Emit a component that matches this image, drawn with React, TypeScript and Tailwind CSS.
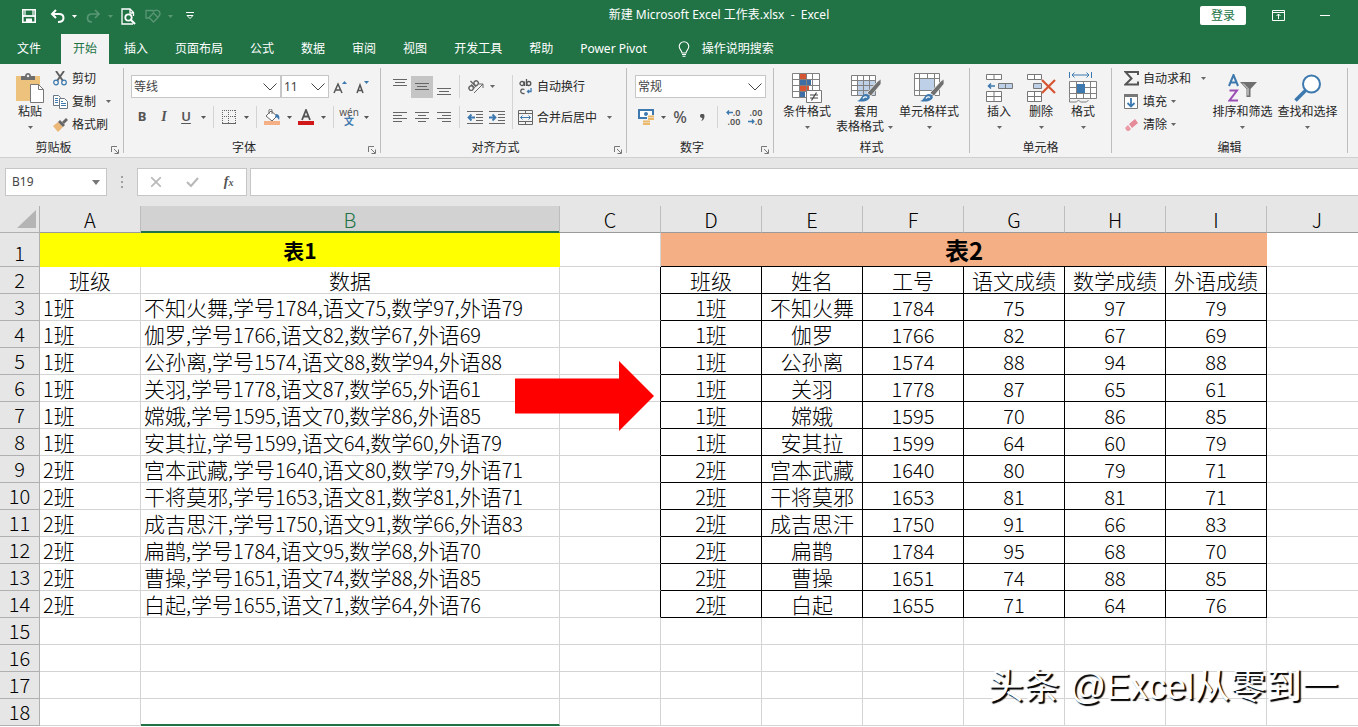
import clsx from "clsx";
import type { ReactNode } from "react";

const columns = ["A", "B", "C", "D", "E", "F", "G", "H", "I", "J"];

const tabs = [
  "插入",
  "页面布局",
  "公式",
  "数据",
  "审阅",
  "视图",
  "开发工具",
  "帮助",
  "Power Pivot",
];

const fields = ["班级", "姓名", "工号", "语文成绩", "数学成绩", "外语成绩"];

// class, name, number, chinese, maths, foreign language
const students = [
  ["1班", "不知火舞", "1784", "75", "97", "79"],
  ["1班", "伽罗", "1766", "82", "67", "69"],
  ["1班", "公孙离", "1574", "88", "94", "88"],
  ["1班", "关羽", "1778", "87", "65", "61"],
  ["1班", "嫦娥", "1595", "70", "86", "85"],
  ["1班", "安其拉", "1599", "64", "60", "79"],
  ["2班", "宫本武藏", "1640", "80", "79", "71"],
  ["2班", "干将莫邪", "1653", "81", "81", "71"],
  ["2班", "成吉思汗", "1750", "91", "66", "83"],
  ["2班", "扁鹊", "1784", "95", "68", "70"],
  ["2班", "曹操", "1651", "74", "88", "85"],
  ["2班", "白起", "1655", "71", "64", "76"],
];

function Caret({ className }: { className?: string }) {
  return (
    <span className={clsx("flex w-3 shrink-0 justify-center", className)}>
      <svg width="5" height="3" viewBox="0 0 5 3" fill="currentColor">
        <path d="M0 0h5L2.5 3z" />
      </svg>
    </span>
  );
}

function Sep() {
  return <span className="mx-1 w-px shrink-0 self-stretch bg-[#d4d4d4]" />;
}

function IconButton({
  label,
  active,
  children,
}: {
  label: string;
  active?: boolean;
  children: ReactNode;
}) {
  return (
    <button
      aria-label={label}
      className={clsx(
        "flex h-[22px] w-[22px] shrink-0 items-center justify-center",
        active && "bg-[#c5c5c5]",
      )}
    >
      {children}
    </button>
  );
}

function SmallButton({
  icon,
  label,
  caret,
}: {
  icon: ReactNode;
  label: string;
  caret?: "near" | "far";
}) {
  return (
    <button className="flex h-[23px] items-center gap-1 whitespace-nowrap">
      <span className="flex w-4 justify-center">{icon}</span>
      <span className="flex items-center">
        {label}
        {caret && (
          <Caret className={clsx("text-[#666]", caret === "far" && "ml-1.5")} />
        )}
      </span>
    </button>
  );
}

function LargeButton({
  icon,
  label,
  second,
  className,
}: {
  icon: ReactNode;
  label: string;
  second?: string;
  className: string;
}) {
  return (
    <button
      className={clsx(
        "flex shrink-0 flex-col items-center whitespace-nowrap pt-2 leading-4",
        className,
      )}
    >
      <span className="flex h-8 items-center">{icon}</span>
      <span>{label}</span>
      <span className="flex h-3.5 items-center">
        {second}
        <Caret className="text-[#666]" />
      </span>
    </button>
  );
}

function Group({
  label,
  launcher,
  className,
  children,
}: {
  label: string;
  launcher?: boolean;
  className: string;
  children: ReactNode;
}) {
  return (
    <>
      <section
        aria-label={label}
        className={clsx("flex shrink-0 flex-col", className)}
      >
        <div className="flex-1">{children}</div>
        <div className="flex h-[19px] items-center">
          <span className="flex-1 text-center">{label}</span>
          {launcher && (
            <button
              aria-label={`${label}设置`}
              className="flex w-4 justify-center pt-1"
            >
              <svg width="8" height="8" viewBox="0 0 8 8" fill="none" stroke="#777">
                <path d="M.5 6V.5H6M3 3l4 4M7.5 3.5v4h-4" />
              </svg>
            </button>
          )}
        </div>
      </section>
      <div className="my-1 w-px shrink-0 bg-[#bdbdbd]" />
    </>
  );
}

function Picker({
  label,
  value,
  className,
}: {
  label: string;
  value: string;
  className: string;
}) {
  return (
    <div className={clsx("relative shrink-0", className)}>
      <select
        aria-label={label}
        className="h-[23px] w-full appearance-none border border-[#c6c6c6] bg-white pl-0.5 text-xs text-[#444]"
      >
        <option>{value}</option>
      </select>
      <svg
        className="pointer-events-none absolute right-1 top-2"
        width="14"
        height="8"
        viewBox="0 0 14 8"
        fill="none"
        stroke="#444"
      >
        <path d="M.5.5 7 7 13.5.5" />
      </svg>
    </div>
  );
}

function Lines({ rows }: { rows: [number, number, number][] }) {
  return (
    <svg width="14" height="16" viewBox="0 0 14 16" stroke="#666">
      {rows.map(([x1, x2, y]) => (
        <path key={y} d={`M${x1} ${y}H${x2}`} />
      ))}
    </svg>
  );
}

function TitleBar() {
  return (
    <header className="flex h-[34px] items-start text-white">
      <div className="flex h-8 w-[238px] shrink-0 items-center pl-[18px]">
        <IconButton label="保存">
          <svg width="14" height="14" viewBox="0 0 14 14" fill="none" stroke="white" strokeWidth="1.6">
            <path d="M.8.8h12.4v12.4H.8z" />
            <path d="M1 7h12" strokeWidth="1.8" />
            <path d="M4 13V9.5h6V13" fill="white" stroke="none" />
            <path d="M3 1v5M11 1v5" strokeWidth="1.2" />
          </svg>
        </IconButton>
        <span className="w-1.5" />
        <IconButton label="撤消">
          <svg width="15" height="14" viewBox="0 0 15 14" fill="none" stroke="white" strokeWidth="2">
            <path d="M6 1 2 5l4 4M2 5h7c3 0 4.5 1.5 4.5 4S11.5 13 8 13" />
          </svg>
        </IconButton>
        <Caret />
        <span className="w-0.5" />
        <div className="flex items-center opacity-25">
          <IconButton label="恢复">
            <svg width="15" height="14" viewBox="0 0 15 14" fill="none" stroke="white" strokeWidth="1.7">
              <path d="m9 1 4 4-4 4m4-4H6C3 5 1.5 6.5 1.5 9S3.5 13 6 13" />
            </svg>
          </IconButton>
          <Caret />
        </div>
        <span className="w-px" />
        <IconButton label="打印预览">
          <svg width="15" height="17" viewBox="0 0 15 17" fill="none" stroke="white" strokeWidth="1.3">
            <path d="M12 16H1V1h8l3.500 3.500V8M9 1v4h3.500" />
            <circle cx="7.5" cy="9.5" r="3.2" strokeWidth="1.8" />
            <path d="m10 12 4 4" strokeWidth="2.2" />
          </svg>
        </IconButton>
        <span className="w-[3px]" />
        <div className="flex items-center opacity-25">
          <IconButton label="形状">
            <svg width="16" height="14" viewBox="0 0 16 14" fill="none" stroke="white" strokeWidth="1.3">
              <path d="M4.500 9H1V1.500h7.500M4 8.500l4.500 4.500L13 8.500 8.500 4z" />
              <path d="M8 3c2-3 7-2 7 1.500 0 2-1 3-2.500 3.500" />
            </svg>
          </IconButton>
          <Caret />
        </div>
        <span className="w-[3px]" />
        <IconButton label="自定义快速访问工具栏">
          <svg width="8" height="8" viewBox="0 0 8 8" fill="none" stroke="white">
            <path d="M0 .5h8M1 3.500h6L4 6.500z" />
          </svg>
        </IconButton>
      </div>
      <h1 className="flex-1 whitespace-pre pt-1.5 text-center text-xs leading-[18px]">
        新建 Microsoft Excel 工作表.xlsx{"  -  "}Excel
      </h1>
      <div className="flex w-[158px] shrink-0 items-center pt-1.5">
        <button className="h-[19px] w-[46px] rounded-xs bg-white text-xs leading-[19px] text-[#217346]">
          登录
        </button>
        <button aria-label="功能区显示选项" className="ml-[26px]">
          <svg width="13" height="11" viewBox="0 0 13 11" fill="none" stroke="white">
            <path d="M.5.5h12v10H.5zM.5 2.5h12M6.5 9V4M4.5 6l2-2 2 2" />
          </svg>
        </button>
        <button aria-label="最小化" className="ml-[35px]">
          <svg width="10" height="11" viewBox="0 0 10 11" stroke="white">
            <path d="M0 5.5h10" />
          </svg>
        </button>
      </div>
    </header>
  );
}

function TabBar() {
  return (
    <nav className="flex h-[30px] items-stretch gap-[3px] whitespace-nowrap pl-[5px] text-xs text-white">
      <button className="mr-[5px] px-3">文件</button>
      <button className="bg-[#f3f3f3] px-3 text-[#217346]">开始</button>
      {tabs.map((tab) => (
        <button key={tab} className="px-3">
          {tab}
        </button>
      ))}
      <button className="flex items-center gap-3 px-4">
        <svg width="12" height="16" viewBox="0 0 12 16" fill="none" stroke="white" strokeWidth="1.1">
          <path d="M4 12c0-2.500-2.800-3.500-2.800-6.500a4.800 4.800 0 0 1 9.600 0C10.800 8.500 8 9.500 8 12zM4 13.500h4M4.500 15.300h3" />
        </svg>
        操作说明搜索
      </button>
    </nav>
  );
}

function ClipboardGroup() {
  return (
    <Group label="剪贴板" launcher className="w-[123px]">
      <div className="flex pl-2">
        <LargeButton
          className="w-11"
          label="粘贴"
          icon={
            <svg width="28" height="30" viewBox="0 0 28 30">
              <path d="M0 3h24v25H0z" fill="#ecc27c" />
              <path d="M5 7V3h4c0-4 6-4 6 0h4v4z" fill="#6d6d6d" />
              <circle cx="12" cy="3" r="1.2" fill="#f3f3f3" />
              <path d="M14.5 11.5h8l5 5v13h-13z" fill="white" stroke="#777" />
              <path d="M22.5 11.5v5h5" fill="none" stroke="#777" />
            </svg>
          }
        />
        <div className="flex flex-col items-start pt-[3px]">
          <SmallButton
            label="剪切"
            icon={
              <svg width="14" height="15" viewBox="0 0 14 15" fill="none">
                <path d="m3 0 7 10M11 0 4 10" stroke="#5f5f5f" strokeWidth="1.9" />
                <circle cx="3" cy="11.5" r="2.3" stroke="#3d79ae" strokeWidth="1.2" />
                <circle cx="11" cy="11.5" r="2.3" stroke="#3d79ae" strokeWidth="1.2" />
              </svg>
            }
          />
          <SmallButton
            label="复制"
            caret="far"
            icon={
              <svg width="15" height="14" viewBox="0 0 15 14" fill="white" stroke="#6a7683">
                <path d="M.5.5h5l2 2v8h-7z" />
                <path d="M6.5 3.5h5l3 3v7h-8z" />
                <path d="M2 3.5h3M2 5.5h3M2 7.5h3M8 8.5h5M8 10.5h5M8 6.5h2" stroke="#3d79ae" />
              </svg>
            }
          />
          <SmallButton
            label="格式刷"
            icon={
              <svg width="15" height="14" viewBox="0 0 15 14">
                <path d="m0 8 5-4 5 5-5 5z" fill="#ecb878" />
                <path d="m5 4 2-2 5 5-2 2z" fill="#666" />
                <path d="m9 4 4-4 2 2-4 4z" fill="#666" />
              </svg>
            }
          />
        </div>
      </div>
    </Group>
  );
}

function FontGroup() {
  return (
    <Group label="字体" launcher className="w-64">
      <div className="flex flex-col gap-2 pl-[7px] pt-[11px]">
        <div className="flex items-center">
          <Picker label="字体" value="等线" className="w-[150px]" />
          <Picker label="字号" value="11" className="w-12" />
          <IconButton label="增大字号">
            <svg width="14" height="14" viewBox="0 0 14 14" fill="none">
              <path d="m1 13 4-9 4 9M2.5 10h5" stroke="#555" strokeWidth="1.5" />
              <path d="m9 4 2.5-3L14 4z" fill="#3d79ae" />
            </svg>
          </IconButton>
          <IconButton label="减小字号">
            <svg width="14" height="14" viewBox="0 0 14 14" fill="none">
              <path d="m2 13 3-8 3 8M3 10.500h4" stroke="#555" strokeWidth="1.5" />
              <path d="m9 1 2.5 3L14 1z" fill="#3d79ae" />
            </svg>
          </IconButton>
        </div>
        <div className="flex items-center text-[#555]">
          <IconButton label="加粗">
            <b className="text-[13px]">B</b>
          </IconButton>
          <IconButton label="倾斜">
            <i className="font-['Liberation_Serif',serif] text-sm font-bold">I</i>
          </IconButton>
          <IconButton label="下划线">
            <span className="text-[13px] font-semibold underline underline-offset-2">
              U
            </span>
          </IconButton>
          <Caret />
          <Sep />
          <IconButton label="边框">
            <svg width="14" height="14" viewBox="0 0 14 14" fill="none" stroke="#666" strokeDasharray="1 1">
              <path d="M.5 0v13M6.5 0v13M13.5 0v13M0 .5h14M0 6.5h14" />
              <path d="M0 13.5h14" strokeDasharray="none" />
            </svg>
          </IconButton>
          <Caret />
          <Sep />
          <IconButton label="填充颜色">
            <svg width="16" height="16" viewBox="0 0 16 16" fill="none">
              <path d="m2 7 5-5 6 5-5 5z" fill="white" stroke="#666" />
              <path d="M5 5V1.500c0-2 3-2 3 0V5" stroke="#666" />
              <path d="M12 5c3 0 4 3 3 6-1-2-2-3-4-3z" fill="#3d79ae" />
              <path d="M0 12h16v4H0z" fill="#f4b084" />
            </svg>
          </IconButton>
          <Caret />
          <IconButton label="字体颜色">
            <svg width="16" height="16" viewBox="0 0 16 16" fill="none">
              <path d="m4 11 4-10 4 10M5.5 7.500h5" stroke="#555" strokeWidth="1.8" />
              <path d="M0 12h16v4H0z" fill="#d01818" />
            </svg>
          </IconButton>
          <Caret />
          <Sep />
          <IconButton label="显示拼音字段">
            <span className="flex flex-col items-center text-[10px] leading-[9px]">
              wén
              <span className="font-bold text-[#3d79ae]">文</span>
            </span>
          </IconButton>
          <Caret />
        </div>
      </div>
    </Group>
  );
}

function AlignmentGroup() {
  return (
    <Group label="对齐方式" launcher className="w-[245px]">
      <div className="flex pl-2 pt-[11px]">
        <div className="flex w-[119px] flex-col gap-2">
          <div className="flex h-[23px] items-center">
            <IconButton label="顶端对齐">
              <Lines rows={[[0, 14, 0.5], [2, 12, 3.5], [0, 14, 6.5]]} />
            </IconButton>
            <IconButton label="垂直居中" active>
              <Lines rows={[[0, 14, 4.5], [2, 12, 7.5], [0, 14, 10.5]]} />
            </IconButton>
            <IconButton label="底端对齐">
              <Lines rows={[[0, 14, 9.5], [2, 12, 12.5], [0, 14, 15.5]]} />
            </IconButton>
            <Sep />
            <IconButton label="方向">
              <svg width="17" height="15" viewBox="0 0 17 15" fill="none" stroke="#666">
                <g transform="rotate(-45 7 7)" strokeWidth="1.4">
                  <circle cx="3.5" cy="6.5" r="2.2" />
                  <path d="M6 4v5" />
                  <circle cx="10.5" cy="6.5" r="2.2" />
                  <path d="M8 1v8" />
                </g>
                <path d="m7 14 9-9M12 5h4v4" />
              </svg>
            </IconButton>
            <Caret className="text-[#666]" />
          </div>
          <div className="flex h-[22px] items-center">
            <IconButton label="左对齐">
              <Lines rows={[[0, 14, 3.5], [0, 9, 6.5], [0, 14, 9.5], [0, 9, 12.5]]} />
            </IconButton>
            <IconButton label="居中">
              <Lines rows={[[0, 14, 3.5], [3, 11, 6.5], [0, 14, 9.5], [3, 11, 12.5]]} />
            </IconButton>
            <IconButton label="右对齐">
              <Lines rows={[[0, 14, 3.5], [5, 14, 6.5], [0, 14, 9.5], [5, 14, 12.5]]} />
            </IconButton>
            <Sep />
            <IconButton label="减少缩进量">
              <svg width="16" height="13" viewBox="0 0 16 13" fill="none" stroke="#666">
                <path d="M0 .5h16M9 3.5h7M9 6.5h7M9 9.5h7M0 12.5h16" />
                <path d="M8 6.5H2M4.5 3.5l-3 3 3 3" stroke="#3d79ae" strokeWidth="1.8" />
              </svg>
            </IconButton>
            <IconButton label="增加缩进量">
              <svg width="16" height="13" viewBox="0 0 16 13" fill="none" stroke="#666">
                <path d="M0 .5h16M9 3.5h7M9 6.5h7M9 9.5h7M0 12.5h16" />
                <path d="M0 6.5h6M3.5 3.5l3 3-3 3" stroke="#3d79ae" strokeWidth="1.8" />
              </svg>
            </IconButton>
          </div>
        </div>
        <Sep />
        <div className="flex flex-col items-start gap-2">
          <SmallButton
            label="自动换行"
            icon={
              <svg width="13" height="16" viewBox="0 0 13 16" fill="none" stroke="#555" strokeWidth="1.3">
                <circle cx="3" cy="4.5" r="2" />
                <path d="M5.5 2.5v4.5M7.5 0v7" />
                <circle cx="9.8" cy="4.5" r="2" />
                <path d="M5.5 10.5c-5-2-5 5 0 4" />
                <path d="M12 9v3.500H8.500M10 11l-1.500 1.500L10 14" stroke="#3d79ae" />
              </svg>
            }
          />
          <SmallButton
            label="合并后居中"
            caret="far"
            icon={
              <svg width="15" height="15" viewBox="0 0 15 15" fill="none" stroke="#666">
                <path d="M.5.5h14v14H.5zM.5 3.5h14M.5 11.5h14M7.5.5v3M7.5 11.5v3" />
                <path d="M2.5 7.5h10M4.5 5.5l-2 2 2 2M10.5 5.5l2 2-2 2" stroke="#3d79ae" />
              </svg>
            }
          />
        </div>
      </div>
    </Group>
  );
}

function NumberGroup() {
  return (
    <Group label="数字" launcher className="w-[146px]">
      <div className="flex flex-col gap-2 pl-2 pt-[11px] text-[#555]">
        <Picker label="数字格式" value="常规" className="w-[131px]" />
        <div className="flex items-center">
          <IconButton label="会计数字格式">
            <svg width="17" height="16" viewBox="0 0 17 16" fill="none">
              <path d="M1 1h14v8H1z" fill="white" stroke="#3d79ae" strokeWidth="2" />
              <circle cx="8" cy="5" r="2" fill="#3d79ae" />
              <path d="M9 6h8v6h-4v4H4v-5h5z" fill="#f3f3f3" />
              <path d="M10 7.500h6M10 10h6M5 12.500h7M5 15h7" stroke="#ecb86a" strokeWidth="1.8" />
            </svg>
          </IconButton>
          <Caret />
          <IconButton label="百分比样式">
            <span className="text-base font-medium">%</span>
          </IconButton>
          <IconButton label="千位分隔样式">
            <svg width="5" height="7" viewBox="0 0 5 7" fill="#555">
              <path d="M0 2a2 2 0 0 1 4.5 0C4.5 5 3 6.5 1 7c1-1 1.5-2 1.3-3C1 4 0 3.3 0 2z" />
            </svg>
          </IconButton>
          <Sep />
          <IconButton label="增加小数位数">
            <span className="flex flex-col items-end text-[9px] font-semibold leading-[9px]">
              <span className="flex items-center">
                <svg width="7" height="5" viewBox="0 0 7 5" fill="none" stroke="#3d79ae" strokeWidth="1.3">
                  <path d="M7 2.5H1M3 .5l-2 2 2 2" />
                </svg>
                .0
              </span>
              .00
            </span>
          </IconButton>
          <IconButton label="减少小数位数">
            <span className="flex flex-col items-end text-[9px] font-semibold leading-[9px]">
              .00
              <span className="flex items-center">
                <svg width="7" height="5" viewBox="0 0 7 5" fill="none" stroke="#3d79ae" strokeWidth="1.3">
                  <path d="M0 2.5h6M4 .5l2 2-2 2" />
                </svg>
                .0
              </span>
            </span>
          </IconButton>
        </div>
      </div>
    </Group>
  );
}

function Brush() {
  return (
    <>
      <path d="m16 20 11-12 3-2v5L20 23z" fill="#707070" stroke="#f3f3f3" strokeWidth=".8" />
      <path d="M6 28c5-1 4-7 9-7 3 0 5 3 3 5-3 3-8 3-12 2z" fill="#3d79ae" />
      <path d="M12 25.500c1-2 3-2 4-1" stroke="white" fill="none" strokeWidth="1.300" />
    </>
  );
}

function StylesGroup() {
  return (
    <Group label="样式" className="w-[195px]">
      <div className="flex pl-1">
        <LargeButton
          className="w-[58px]"
          label="条件格式"
          icon={
            <svg width="30" height="30" viewBox="0 0 30 30" fill="none">
              <path d="M.5.5h27v24H.5z" fill="white" />
              <path d="M8 1h6v5H8zM8 13h9v5H8z" fill="#d65532" />
              <path d="M8 7h11v5H8zM8 19h5v5H8z" fill="#3d6fa5" />
              <path d="M.5.5h27v24H.5zM.5 6.5h27M.5 12.5h27M.5 18.5h27M7.5.5v24M20.5.5v24M14.5.5v24" stroke="#808080" />
              <path d="M14.5 17.5h15v12h-15z" fill="white" stroke="#777" />
              <path d="M18 22h8M18 25h8M24.5 19.5l-5 8" stroke="#444" strokeWidth="1.2" />
            </svg>
          }
        />
        <LargeButton
          className="w-[60px]"
          label="套用"
          second="表格格式"
          icon={
            <svg width="30" height="30" viewBox="0 0 30 30" fill="none">
              <path d="M.5 2.5h24v20H.5z" fill="white" />
              <path d="M7 8h17v14H7z" fill="#bdd0e8" />
              <path d="M.5 2.5h24v20H.5zM.5 7.5h24M.5 12.5h24M.5 17.5h24M6.5 2.5v20M12.5 2.5v20M18.5 2.5v20" stroke="#808080" />
              <Brush />
            </svg>
          }
        />
        <LargeButton
          className="w-[66px]"
          label="单元格样式"
          icon={
            <svg width="30" height="30" viewBox="0 0 30 30" fill="none">
              <path d="M.5.5h25v22H.5z" fill="white" stroke="#808080" />
              <path d="M.5 5.5h25M.5 17.5h25M5.5.5v22M20.5.5v22M13.5.5v5" stroke="#808080" />
              <path d="M6 6h14v11H6z" fill="#bdd0e8" />
              <Brush />
            </svg>
          }
        />
      </div>
    </Group>
  );
}

function CellsGroup() {
  return (
    <Group label="单元格" className="w-[141px]">
      <div className="flex pl-2">
        <LargeButton
          className="w-[42px]"
          label="插入"
          icon={
            <svg width="27" height="28" viewBox="0 0 27 28" fill="white" stroke="#777">
              <path d="M.5.5h15v5H.5zM8 .5v5M.5 17.5h15v10H.5zM.5 22.5h15M8 17.5v10" />
              <path d="M12.5 9.5h14v5h-14z" fill="#bdd0e8" />
              <path d="M19.5 9.5v5" />
              <path d="M9 12H3M5 9.5 2.5 12 5 14.5" fill="none" stroke="#3d79ae" strokeWidth="1.6" />
            </svg>
          }
        />
        <LargeButton
          className="w-[42px]"
          label="删除"
          icon={
            <svg width="29" height="28" viewBox="0 0 29 28" fill="white" stroke="#777">
              <path d="M.5.5h14v5H.5zM7.5.5v5M.5 17.5h14v10H.5zM.5 22.5h14M7.5 17.5v10" />
              <path d="M6.5 9.5h8v5h-8z" fill="#bdd0e8" />
              <path d="m15 6 13 13M28 6 15 19" fill="none" stroke="#d65532" strokeWidth="2.2" />
            </svg>
          }
        />
        <LargeButton
          className="w-[42px]"
          label="格式"
          icon={
            <svg width="28" height="32" viewBox="0 0 28 32" fill="none" stroke="#808080">
              <path d="M.5 9.5h27v17H.5z" fill="white" />
              <path d="M.5 15.5h27M.5 21.5h27M7.5 9.5v17M14.5 9.5v17M21.5 9.5v17M.5 27v3h7l2-2 2 2h6l2-2" />
              <path d="M8 12h8v9H8z" fill="#3d79ae" stroke="none" />
              <path d="M.5 0v6M22.5 0v6M3 3h17M5.5.5 3 3l2.500 2.500M17.500.5 20 3l-2.500 2.500" stroke="#3d79ae" />
            </svg>
          }
        />
      </div>
    </Group>
  );
}

function EditingGroup() {
  return (
    <Group label="编辑" className="w-[235px]">
      <div className="flex pl-[11px]">
        <div className="flex w-[87px] flex-col items-start pt-[3px]">
          <SmallButton
            label="自动求和"
            caret="far"
            icon={
              <svg width="15" height="15" viewBox="0 0 15 15" fill="none" stroke="#555" strokeWidth="2">
                <path d="M14 4V1H1.5l6 6.5-6 6H14v-3" />
              </svg>
            }
          />
          <SmallButton
            label="填充"
            caret="near"
            icon={
              <svg width="14" height="15" viewBox="0 0 14 15" fill="none">
                <path d="M.5.5h13v14H.5z" fill="white" stroke="#777" />
                <path d="M0 0h14v3H0z" fill="#777" />
                <path d="M7 4v8M3.5 9 7 12.5 10.5 9" stroke="#3d79ae" strokeWidth="1.8" />
              </svg>
            }
          />
          <SmallButton
            label="清除"
            caret="near"
            icon={
              <svg width="13" height="12" viewBox="0 0 13 12">
                <path d="m4 5 6-5 3 4-6 5z" fill="#e58a98" />
                <path d="m3 6 3 4-2 2H2L0 9z" fill="#ea9aa6" />
              </svg>
            }
          />
        </div>
        <LargeButton
          className="w-[65px]"
          label="排序和筛选"
          icon={
            <svg width="29" height="28" viewBox="0 0 29 28" fill="none">
              <path d="m1 12 4.5-11L10 12M2.5 8.5h6" stroke="#3d79ae" strokeWidth="2" />
              <path d="M1.5 16.5H9l-7.5 10H10" stroke="#9b4fb5" strokeWidth="2" />
              <path d="M12 8h17l-6.5 7v8h-4v-8z" fill="#707070" />
              <path d="m15 9.5 5 5v7" stroke="#eee" />
            </svg>
          }
        />
        <LargeButton
          className="w-[65px]"
          label="查找和选择"
          icon={
            <svg width="28" height="28" viewBox="0 0 28 28" fill="none" stroke="#3d79ae">
              <circle cx="17.5" cy="10" r="8.5" fill="white" strokeWidth="2" />
              <path d="M11.5 16.5 1.5 26.5" strokeWidth="3.5" />
            </svg>
          }
        />
      </div>
    </Group>
  );
}

function FormulaBar() {
  return (
    <div className="flex h-12 items-center">
      <div className="ml-[5px] flex h-7 w-[102px] shrink-0 items-center border border-[#c6c6c6] bg-white">
        <input
          aria-label="名称框"
          defaultValue="B19"
          className="min-w-0 flex-1 pl-1.5 text-xs text-[#444] outline-none"
        />
        <button aria-label="选择名称" className="px-1.5">
          <svg width="8" height="5" viewBox="0 0 8 5" fill="#777">
            <path d="M0 0h8L4 5z" />
          </svg>
        </button>
      </div>
      <svg className="mx-3.5" width="2" height="12" viewBox="0 0 2 12" fill="#a0a0a0">
        <path d="M0 0h2v2H0zM0 5h2v2H0zM0 10h2v2H0z" />
      </svg>
      <div className="flex h-7 w-[110px] shrink-0 items-center justify-around border border-[#c6c6c6] bg-white">
        <button aria-label="取消">
          <svg width="10" height="10" viewBox="0 0 10 10" stroke="#b8b8b8" strokeWidth="1.6">
            <path d="m0 0 10 10M10 0 0 10" />
          </svg>
        </button>
        <button aria-label="输入">
          <svg width="13" height="10" viewBox="0 0 13 10" fill="none" stroke="#b8b8b8" strokeWidth="2">
            <path d="m1 5 4 4 7-8" />
          </svg>
        </button>
        <button
          aria-label="插入函数"
          className="font-['Liberation_Serif',serif] text-sm font-bold italic leading-4 text-[#555]"
        >
          f<span className="text-[10px]">x</span>
        </button>
      </div>
      <input
        aria-label="编辑栏"
        className="ml-[3px] h-7 min-w-0 flex-1 border border-r-0 border-[#c6c6c6] bg-white px-2 text-xs"
      />
    </div>
  );
}

// Latin runs are set a little smaller than the Chinese glyphs beside them
function Mixed({ text }: { text: string }) {
  return text.split(/([\x20-\x7e]+)/).map((part, i) =>
    i % 2 ? (
      <span key={i} className="text-xl leading-none">
        {part}
      </span>
    ) : (
      part
    ),
  );
}

const cell = "whitespace-nowrap border-b border-r border-[#d4d4d4] p-0";

function Sheet() {
  const rows = Array.from({ length: 17 }, (_, i) => i + 2);

  return (
    <table className="w-[1368px] table-fixed border-separate border-spacing-0 bg-white text-[21px] font-light leading-[26px] text-black">
      <colgroup>
        <col className="w-10" />
        {columns.map((c) => (
          <col key={c} className={c === "B" ? "w-[419px]" : "w-[101px]"} />
        ))}
      </colgroup>
      <thead>
        <tr className="h-[27px] bg-[#e6e6e6] text-xl leading-6">
          <th aria-label="全选" className="border-b border-r border-[#b0b0b0] p-0">
            <svg className="ml-auto mr-[3px]" width="19" height="18" viewBox="0 0 19 18" fill="#b4b4b4">
              <path d="M19 0v18H0z" />
            </svg>
          </th>
          {columns.map((c) => (
            <th
              key={c}
              className={clsx(
                "border-b border-r border-r-[#bdbdbd] p-0 pt-0.5 font-light",
                c === "B"
                  ? "border-b-[#217346] bg-[#d2d2d2] text-[#217346] shadow-[inset_0_-1px_0_#217346]"
                  : "border-b-[#9a9a9a]",
              )}
            >
              {c}
            </th>
          ))}
        </tr>
      </thead>
      <tbody>
        <tr className="h-[34px]">
          <th className="border-b border-r border-[#b0b0b0] bg-[#e6e6e6] p-0 align-bottom text-xl font-light leading-[26px]">
            1
          </th>
          <td colSpan={2} className="bg-[#ffff00] p-0 text-center font-bold">
            表1
          </td>
          <td className={cell} />
          <td
            colSpan={6}
            className="border-b border-black bg-[#f4b084] p-0 text-center text-2xl font-bold"
          >
            表2
          </td>
          <td className={cell} />
        </tr>
        {rows.map((n) => {
          const s = students[n - 3];
          const right = n === 2 ? fields : s;
          return (
            <tr key={n} className="h-[27px]">
              <th className="border-b border-r border-[#b0b0b0] bg-[#e6e6e6] p-0 text-xl font-light leading-[26px]">
                {n}
              </th>
              <td className={clsx(cell, n === 2 ? "text-center" : "pl-[3px]")}>
                {n === 2 ? "班级" : s && <Mixed text={s[0]} />}
              </td>
              <td
                className={clsx(
                  "whitespace-nowrap border-r border-r-[#d4d4d4] p-0",
                  n === 2 ? "text-center" : "pl-[3px]",
                  n === 18
                    ? "border-b-2 border-b-[#217346]"
                    : "border-b border-b-[#d4d4d4]",
                )}
              >
                {n === 2
                  ? "数据"
                  : s && (
                      <Mixed
                        text={`${s[1]},学号${s[2]},语文${s[3]},数学${s[4]},外语${s[5]}`}
                      />
                    )}
              </td>
              <td
                className={clsx(
                  "border-b border-r border-b-[#d4d4d4] p-0",
                  right ? "border-r-black" : "border-r-[#d4d4d4]",
                )}
              />
              {fields.map((f, i) => (
                <td
                  key={f}
                  className={clsx(
                    "whitespace-nowrap border-b border-r p-0 text-center",
                    right ? "border-black" : "border-[#d4d4d4]",
                  )}
                >
                  {right && <Mixed text={right[i]} />}
                </td>
              ))}
              <td className={cell} />
            </tr>
          );
        })}
      </tbody>
    </table>
  );
}

export default function App() {
  return (
    <div className="flex h-screen flex-col overflow-hidden bg-white font-['Noto_Sans','Noto_Sans_CJK_SC',sans-serif] text-xs text-[#262626]">
      <div className="shrink-0 bg-[#217346]">
        <TitleBar />
        <TabBar />
      </div>
      <div className="flex h-[94px] shrink-0 overflow-hidden border-b border-[#cfcfcf] bg-[#f3f3f3]">
        <ClipboardGroup />
        <FontGroup />
        <AlignmentGroup />
        <NumberGroup />
        <StylesGroup />
        <CellsGroup />
        <EditingGroup />
      </div>
      <div className="shrink-0 bg-[#e6e6e6]">
        <FormulaBar />
      </div>
      <main className="relative min-h-0 flex-1 overflow-hidden font-['Noto_Sans_CJK_SC',sans-serif]">
        <Sheet />
        <svg
          className="absolute left-[515px] top-[155px]"
          width="139"
          height="70"
          viewBox="0 0 139 70"
          fill="#ff0000"
        >
          <path d="M0 17.5h104V0l35 35-35 35V52.5H0z" />
        </svg>
        <p className="absolute bottom-4 right-5 whitespace-nowrap font-['Liberation_Sans','Noto_Sans_CJK_SC',sans-serif] text-4xl leading-12 text-white [text-shadow:2px_2px_1px_#000]">
          头条 @Excel从零到一
        </p>
      </main>
    </div>
  );
}
